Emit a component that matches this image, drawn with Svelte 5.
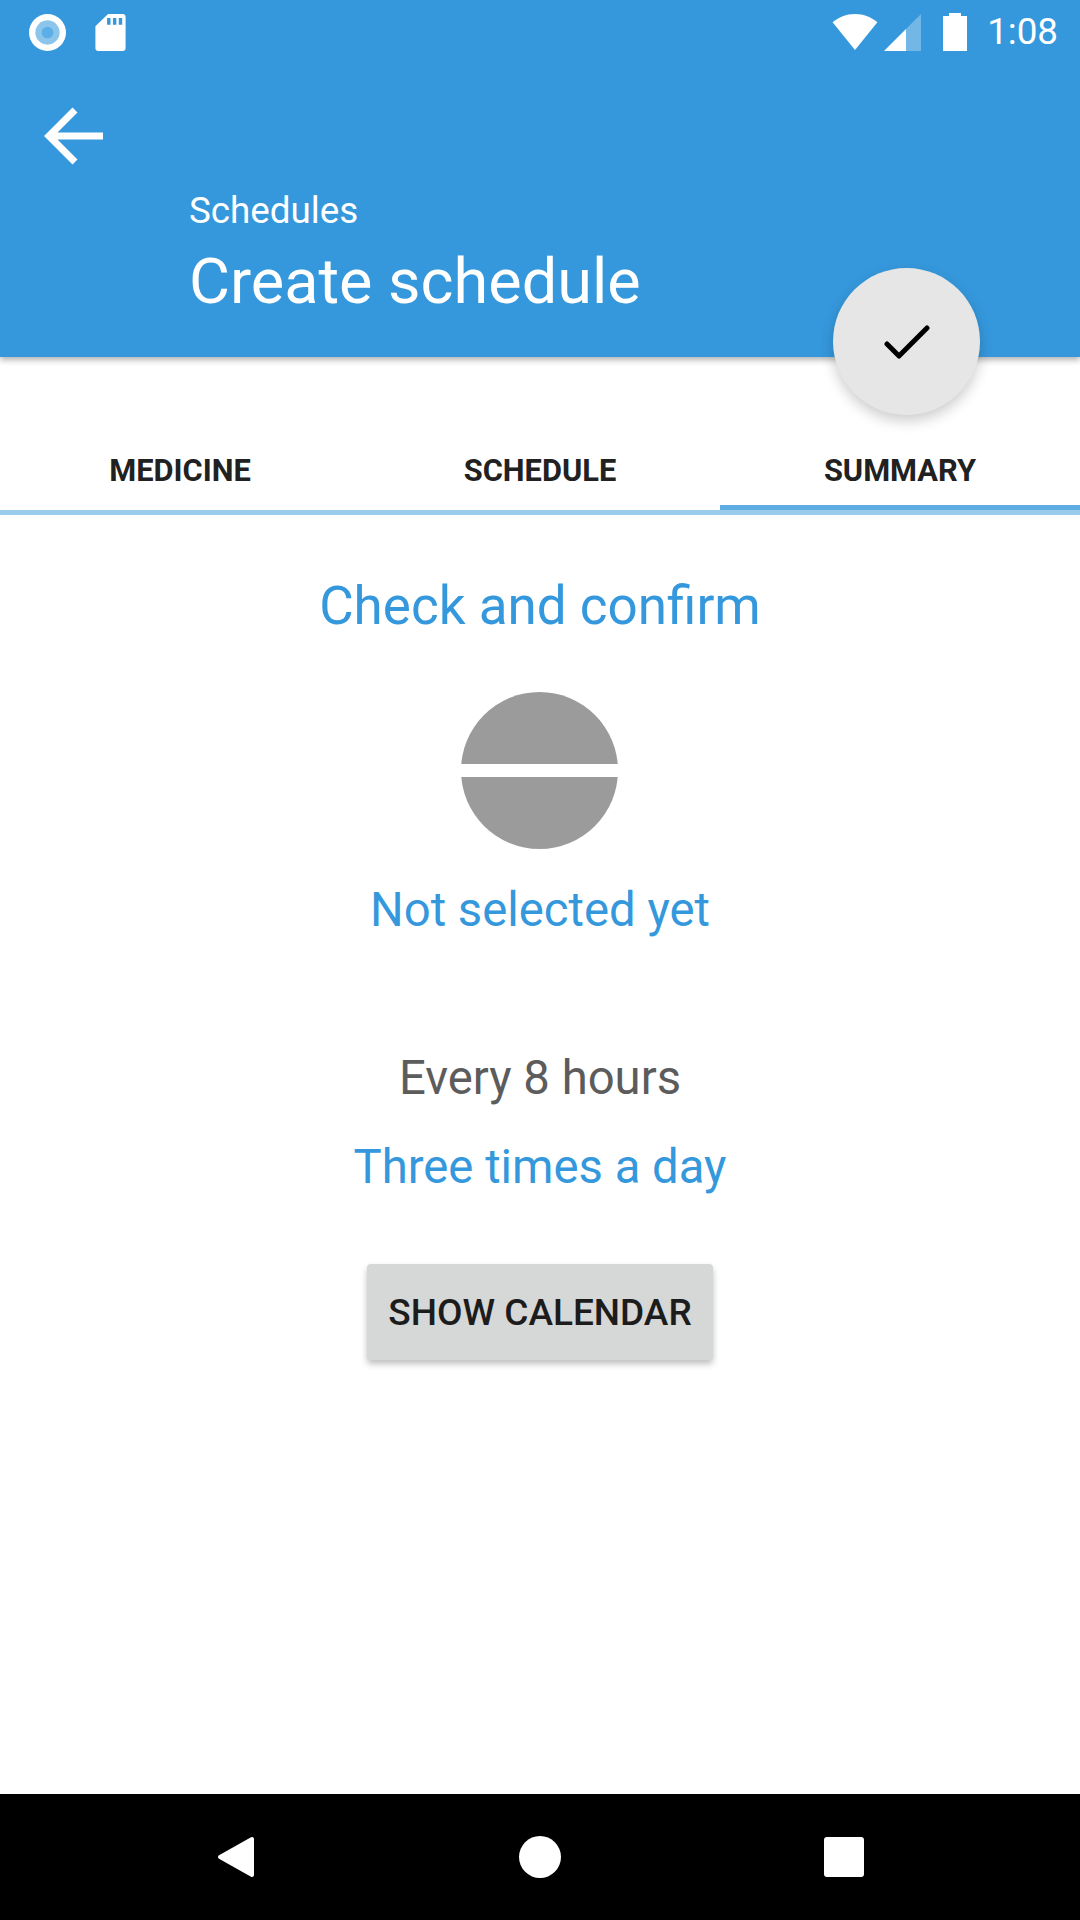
<script>
  const tabs = ['MEDICINE', 'SCHEDULE', 'SUMMARY']
  let active = 2
</script>

<div class="screen">
  <header>
    <div class="status">
      <div class="status-left">
        <svg width="37" height="37" viewBox="0 0 38 38">
          <circle cx="19" cy="19" r="19" fill="#fff"/>
          <circle cx="19" cy="19" r="12.5" fill="#8cc5ec"/>
          <circle cx="19" cy="19" r="6" fill="#5dade6"/>
        </svg>
        <svg width="31" height="37" viewBox="0 0 31 38">
          <path fill="#fff" fill-rule="evenodd" d="M13 0H28a3 3 0 0 1 3 3V35a3 3 0 0 1-3 3H3a3 3 0 0 1-3-3V12.500ZM12 4V11H15.500V4ZM18 4V11H21.500V4ZM24 4V11H27.500V4Z"/>
        </svg>
      </div>
      <div class="status-right">
        <svg class="wifi" width="46" height="37" viewBox="0 0 46 38">
          <path fill="#fff" d="M0 8.500C6 3.500 14 0 23 0S40 3.500 46 8.500L23 37Z"/>
        </svg>
        <svg class="signal" width="37" height="37" viewBox="0 0 37 37">
          <path fill="#fff" d="M0 37L22 15V37Z"/>
          <path fill="#fff" opacity=".3" d="M22 15L37 0V37H22Z"/>
        </svg>
        <svg class="battery" width="24" height="38" viewBox="0 0 24 38">
          <path fill="#fff" d="M6 0H18V3H24V38H0V3H6Z"/>
        </svg>
        <span class="time">1:08</span>
      </div>
    </div>

    <div class="toolbar">
      <svg class="back" width="60" height="60" viewBox="0 0 60 60">
        <path fill="none" stroke="#fff" stroke-width="7" stroke-linecap="butt" d="M59 30H5M31 4L5 30L31 56"/>
      </svg>
    </div>

    <div class="titles">
      <div class="crumb">Schedules</div>
      <h1>Create schedule</h1>
    </div>

    <button class="fab" aria-label="Confirm">
      <svg width="46" height="36" viewBox="0 0 46 36">
        <path fill="none" stroke="#000" stroke-width="5" stroke-linecap="round" stroke-linejoin="round" d="M3 19L15 31L43 3"/>
      </svg>
    </button>
  </header>

  <nav class="tabs">
    {#each tabs as tab, i}
      <div class="tab" class:active={i === active}>{tab}</div>
    {/each}
  </nav>

  <main>
    <h2>Check and confirm</h2>

    <div class="pill">
      <span></span>
      <span></span>
    </div>

    <div class="medicine">Not selected yet</div>
    <div class="every">Every 8 hours</div>
    <div class="freq">Three times a day</div>

    <button class="calendar">SHOW CALENDAR</button>
  </main>

  <footer>
    <svg width="38" height="42" viewBox="0 0 38 42">
      <path fill="#fff" stroke="#fff" stroke-width="4" stroke-linejoin="round" d="M35 3V39L3 21Z"/>
    </svg>
    <svg width="42" height="42" viewBox="0 0 42 42">
      <circle cx="21" cy="21" r="21" fill="#fff"/>
    </svg>
    <svg width="40" height="40" viewBox="0 0 40 40">
      <rect width="40" height="40" rx="3" fill="#fff"/>
    </svg>
  </footer>
</div>

<style>
  :global(body) {
    margin: 0;
    background: #fff;
  }

  .screen {
    display: flex;
    flex-direction: column;
    width: 1080px;
    height: 1920px;
    overflow: hidden;
    font-family: Roboto, sans-serif;
    background: #fff;
  }

  header {
    position: relative;
    height: 357px;
    flex: none;
    background: #3598dc;
    box-shadow: 0 3px 6px rgba(0, 0, 0, .3);
    z-index: 2;
  }

  .status {
    display: flex;
    justify-content: space-between;
    align-items: center;
    height: 64px;
    padding: 0 22px 0 29px;
  }

  .status-left {
    display: flex;
    gap: 29px;
  }

  .status-right {
    display: flex;
    align-items: center;
    color: #fff;
  }

  .signal {
    margin-left: 6px;
  }

  .battery {
    margin-left: 22px;
  }

  .time {
    margin-left: 20px;
    font-size: 36.75px;
    line-height: 38px;
  }

  .toolbar {
    height: 127px;
    box-sizing: border-box;
    padding: 42px 0 0 44px;
  }

  .back {
    display: block;
  }

  .titles {
    padding-left: 189px;
    color: #fff;
  }

  .crumb {
    font-size: 36.75px;
    line-height: 40px;
  }

  h1 {
    margin: 16px 0 0;
    font-size: 63px;
    line-height: 70px;
    font-weight: 400;
  }

  .fab {
    position: absolute;
    left: 833px;
    top: 268px;
    display: flex;
    align-items: center;
    justify-content: center;
    width: 147px;
    height: 147px;
    padding: 2px 0 0;
    border: none;
    border-radius: 50%;
    background: #e6e6e6;
    box-shadow: 0 6px 14px rgba(0, 0, 0, .2);
  }

  .tabs {
    display: flex;
    height: 158px;
    flex: none;
    box-sizing: border-box;
    border-bottom: 5px solid #98cbec;
  }

  .tab {
    display: flex;
    flex: 1;
    align-items: flex-end;
    justify-content: center;
    box-sizing: border-box;
    padding-bottom: 22px;
    font-size: 30.8px;
    line-height: 34px;
    font-weight: 700;
    color: #212121;
  }

  .tab.active {
    border-bottom: 5px solid #5dade2;
    padding-bottom: 17px;
  }

  main {
    display: flex;
    flex: 1;
    flex-direction: column;
    align-items: center;
  }

  h2 {
    margin: 60px 0 0;
    font-size: 53px;
    line-height: 62px;
    font-weight: 400;
    color: #3598dc;
  }

  .pill {
    display: flex;
    flex-direction: column;
    justify-content: space-between;
    width: 157px;
    height: 157px;
    margin: 55px 1px 0 0;
    border-radius: 50%;
    overflow: hidden;
  }

  .pill span {
    height: 72px;
    background: #9b9b9b;
  }

  .medicine {
    margin-top: 34px;
    font-size: 47.25px;
    line-height: 54px;
    color: #3598dc;
  }

  .every {
    margin-top: 114px;
    font-size: 47.25px;
    line-height: 54px;
    color: #5c5c5c;
  }

  .freq {
    margin-top: 35px;
    font-size: 47.25px;
    line-height: 54px;
    color: #3598dc;
  }

  .calendar {
    width: 346px;
    height: 96px;
    margin-top: 70px;
    padding: 0;
    border: none;
    border-radius: 4px;
    background: #d6d7d7;
    box-shadow: 0 4px 6px rgba(0, 0, 0, .25);
    font-family: inherit;
    font-size: 37px;
    font-weight: 500;
    color: #1c1c1c;
  }

  footer {
    display: flex;
    align-items: center;
    height: 126px;
    flex: none;
    padding: 0 216px 0 217px;
    justify-content: space-between;
    background: #000;
  }
</style>
